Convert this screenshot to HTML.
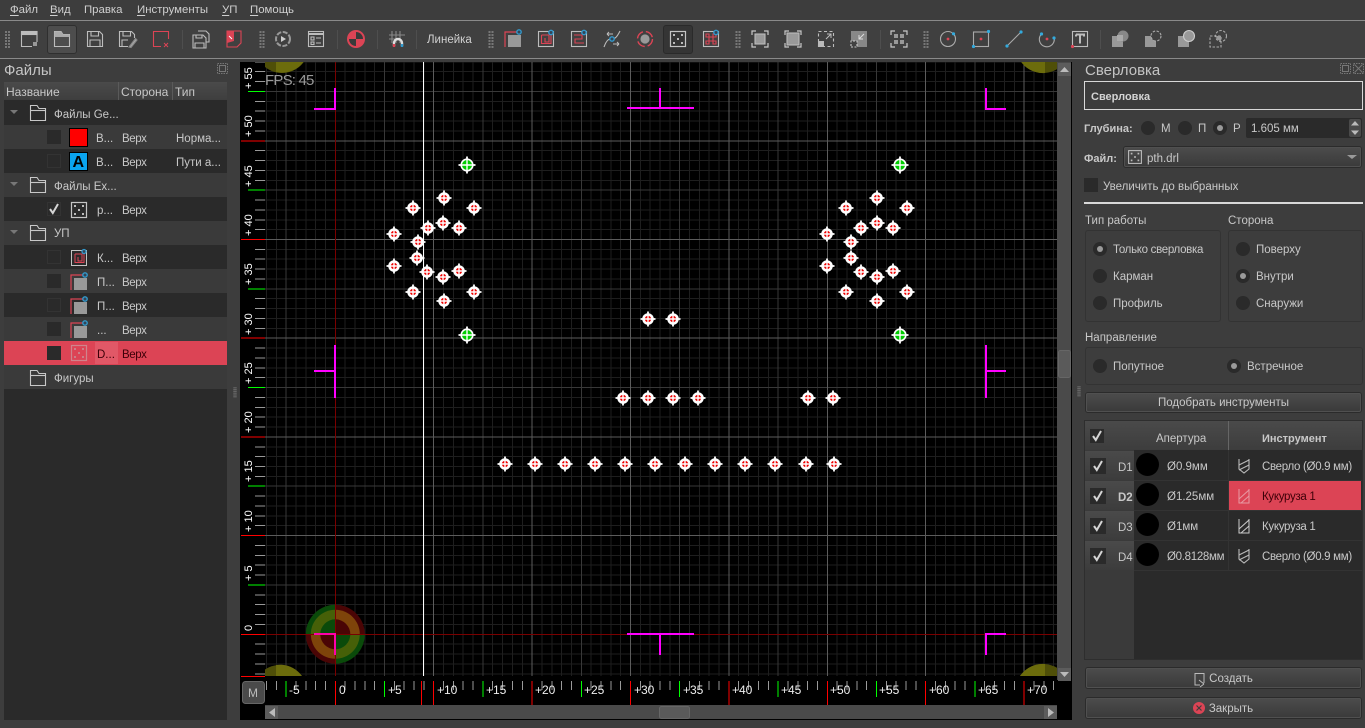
<!DOCTYPE html>
<html><head><meta charset="utf-8"><title>FlatCAM</title>
<style>
html,body{margin:0;padding:0;width:1365px;height:728px;overflow:hidden;background:#3d3d3d}
body{position:relative;font-family:"Liberation Sans","DejaVu Sans",sans-serif;font-size:11.5px;color:#c8c8c8}
.b{position:absolute;box-sizing:border-box}
.t{position:absolute;white-space:nowrap;line-height:16px;height:16px;margin-top:1px}
.m{font-size:11.4px;color:#cfcfcf;top:1px}
.m u{text-underline-offset:2px}
.h{font-size:12px;top:83px;color:#c8c8c8}
.hd{font-size:15px;color:#c4c4c4}
.v{left:122px;letter-spacing:-.4px}
.ts{letter-spacing:-.3px}
.btn{position:absolute;box-sizing:border-box;background:linear-gradient(#4c4c4c,#3a3a3a);border:1px solid #2b2b2b;outline:1px solid #505050;outline-offset:-2px;border-radius:3px;text-align:center;color:#c8c8c8;font-size:11.5px}
.r{position:absolute;width:14px;height:14px;border-radius:50%;background:#2a2a2a}
.r.on::after{content:"";position:absolute;left:4px;top:4px;width:6px;height:6px;border-radius:50%;background:#9a9a9a}
.g{position:absolute;box-sizing:border-box;border:1px solid #333;border-radius:3px}
.bold{font-weight:bold}
svg{position:absolute;left:0;top:0}
</style></head><body>
<!-- toolbar -->
<div class="b" style="left:0;top:20px;width:1365px;height:1px;background:#8a8a8a"></div>
<div class="b" style="left:0;top:21px;width:1365px;height:37px;background:#404040"></div>
<div class="b" style="left:0;top:58px;width:1365px;height:1px;background:#8a8a8a"></div>
<div class="b" style="left:47px;top:25px;width:30px;height:29px;background:#4d4d4d;border:1px solid #2f2f2f;border-radius:3px"></div>
<div class="b" style="left:663px;top:25px;width:30px;height:29px;background:#353535;border:1px solid #2a2a2a;border-radius:3px"></div>
<span class="t m" style="left:10px"><u>Ф</u>айл</span>
<span class="t m" style="left:50px"><u>В</u>ид</span>
<span class="t m" style="left:84px">Правка</span>
<span class="t m" style="left:137px"><u>И</u>нструменты</span>
<span class="t m" style="left:222px"><u>У</u>П</span>
<span class="t m" style="left:250px"><u>П</u>омощь</span>
<span class="t" style="left:427px;top:31px;font-size:11.5px;color:#d0d0d0">Линейка</span>

<!-- left panel -->
<span class="t hd" style="left:4px;top:62px">Файлы</span>
<div class="b" style="left:4px;top:82px;width:223px;height:638px;background:#2a2a2a"></div>
<div class="b" style="left:4px;top:82px;width:223px;height:18px;background:linear-gradient(#4a4a4a,#3e3e3e)"></div>
<div class="b" style="left:118px;top:82px;width:1px;height:18px;background:#5a5a5a"></div>
<div class="b" style="left:172px;top:82px;width:1px;height:18px;background:#5a5a5a"></div>
<span class="t h" style="left:6px">Название</span>
<span class="t h" style="left:121px">Сторона</span>
<span class="t h" style="left:175px">Тип</span>
<div class="b" style="left:4px;top:125px;width:223px;height:24px;background:#3a3a3a"></div>
<div class="b" style="left:4px;top:173px;width:223px;height:24px;background:#3a3a3a"></div>
<div class="b" style="left:4px;top:221px;width:223px;height:24px;background:#3a3a3a"></div>
<div class="b" style="left:4px;top:269px;width:223px;height:24px;background:#3a3a3a"></div>
<div class="b" style="left:4px;top:317px;width:223px;height:24px;background:#3a3a3a"></div>
<div class="b" style="left:4px;top:341px;width:223px;height:24px;background:#dc4455"></div>
<div class="b" style="left:95px;top:342px;width:23px;height:22px;background:#e15867"></div>
<div class="b" style="left:4px;top:365px;width:223px;height:24px;background:#3a3a3a"></div>
<span class="t" style="left:54px;top:106px">Файлы Ge...</span>
<span class="t" style="left:96px;top:130px">В...</span><span class="t v" style="top:130px">Верх</span><span class="t" style="left:176px;top:130px">Норма...</span>
<span class="t" style="left:96px;top:154px">В...</span><span class="t v" style="top:154px">Верх</span><span class="t" style="left:176px;top:154px">Пути а...</span>
<span class="t" style="left:54px;top:178px">Файлы Ex...</span>
<span class="t" style="left:97px;top:202px">p...</span><span class="t v" style="top:202px">Верх</span>
<span class="t" style="left:54px;top:225px">УП</span>
<span class="t" style="left:97px;top:250px">К...</span><span class="t v" style="top:250px">Верх</span>
<span class="t" style="left:97px;top:274px">П...</span><span class="t v" style="top:274px">Верх</span>
<span class="t" style="left:97px;top:298px">П...</span><span class="t v" style="top:298px">Верх</span>
<span class="t" style="left:97px;top:322px">...</span><span class="t v" style="top:322px">Верх</span>
<span class="t" style="left:97px;top:346px;color:#3d0008">D...</span><span class="t v" style="top:346px;color:#3d0008">Верх</span>
<span class="t" style="left:54px;top:370px">Фигуры</span>

<!-- right panel -->
<span class="t hd" style="left:1085px;top:62px">Сверловка</span>
<div class="b" style="left:1084px;top:81px;width:279px;height:29px;border:1px solid #d8d8d8;background:#3c3c3c"></div>
<span class="t bold" style="left:1091px;top:88px;font-size:11px;color:#d4d4d4">Сверловка</span>
<span class="t bold" style="left:1084px;top:120px;font-size:11px">Глубина:</span>
<div class="r" style="left:1141px;top:121px"></div><span class="t" style="left:1161px;top:120px">М</span>
<div class="r" style="left:1178px;top:121px"></div><span class="t" style="left:1198px;top:120px">П</span>
<div class="r on" style="left:1213px;top:121px"></div><span class="t" style="left:1233px;top:120px">Р</span>
<div class="b" style="left:1246px;top:118px;width:116px;height:20px;background:#2a2a2a;border-radius:2px"></div>
<span class="t" style="left:1251px;top:120px">1.605 мм</span>
<div class="b" style="left:1349px;top:119px;width:12px;height:18px;background:#4a4a4a;border-radius:2px"></div>
<span class="t bold" style="left:1084px;top:150px;font-size:11px">Файл:</span>
<div class="btn" style="left:1123px;top:146px;width:239px;height:22px"></div>
<span class="t" style="left:1147px;top:150px">pth.drl</span>
<div class="b" style="left:1084px;top:178px;width:14px;height:14px;background:#2a2a2a"></div>
<span class="t" style="left:1103px;top:178px">Увеличить до выбранных</span>
<div class="b" style="left:1084px;top:202px;width:279px;height:2px;background:#d8d8d8"></div>
<span class="t" style="left:1085px;top:212px">Тип работы</span>
<span class="t" style="left:1228px;top:212px">Сторона</span>
<div class="g" style="left:1085px;top:230px;width:136px;height:92px"></div>
<div class="g" style="left:1228px;top:230px;width:135px;height:92px"></div>
<div class="r on" style="left:1093px;top:242px"></div><span class="t ts" style="left:1113px;top:241px">Только сверловка</span>
<div class="r" style="left:1093px;top:269px"></div><span class="t" style="left:1113px;top:268px">Карман</span>
<div class="r" style="left:1093px;top:296px"></div><span class="t" style="left:1113px;top:295px">Профиль</span>
<div class="r" style="left:1236px;top:242px"></div><span class="t" style="left:1256px;top:241px">Поверху</span>
<div class="r on" style="left:1236px;top:269px"></div><span class="t" style="left:1256px;top:268px">Внутри</span>
<div class="r" style="left:1236px;top:296px"></div><span class="t" style="left:1256px;top:295px">Снаружи</span>
<span class="t" style="left:1085px;top:329px">Направление</span>
<div class="g" style="left:1085px;top:347px;width:278px;height:38px"></div>
<div class="r" style="left:1093px;top:359px"></div><span class="t" style="left:1113px;top:358px">Попутное</span>
<div class="r on" style="left:1227px;top:359px"></div><span class="t" style="left:1247px;top:358px">Встречное</span>
<div class="btn" style="left:1085px;top:392px;width:277px;height:21px;line-height:20px">Подобрать инструменты</div>

<!-- table -->
<div class="b" style="left:1084px;top:420px;width:279px;height:240px;background:#2a2a2a;border:1px solid #2e2e2e"></div>
<div class="b" style="left:1085px;top:421px;width:277px;height:29px;background:linear-gradient(#4a4a4a,#3d3d3d)"></div>
<div class="b" style="left:1228px;top:421px;width:1px;height:29px;background:#666"></div>
<div class="b" style="left:1085px;top:450px;width:49px;height:209px;background:#3a3a3a"></div>
<div class="b" style="left:1085px;top:451px;width:49px;height:29px;background:linear-gradient(#4a4a4a,#3c3c3c)"></div>
<div class="b" style="left:1085px;top:481px;width:49px;height:29px;background:linear-gradient(#4a4a4a,#3c3c3c)"></div>
<div class="b" style="left:1085px;top:511px;width:49px;height:29px;background:linear-gradient(#4a4a4a,#3c3c3c)"></div>
<div class="b" style="left:1085px;top:541px;width:49px;height:29px;background:linear-gradient(#4a4a4a,#3c3c3c)"></div>
<div class="b" style="left:1134px;top:480px;width:228px;height:1px;background:#333"></div>
<div class="b" style="left:1134px;top:510px;width:228px;height:1px;background:#333"></div>
<div class="b" style="left:1134px;top:540px;width:228px;height:1px;background:#333"></div>
<div class="b" style="left:1134px;top:570px;width:228px;height:1px;background:#333"></div>
<div class="b" style="left:1228px;top:450px;width:1px;height:120px;background:#333"></div>
<div class="b" style="left:1229px;top:481px;width:132px;height:29px;background:#dc4455"></div>
<div class="b" style="left:1090px;top:429px;width:14px;height:14px;background:#2a2a2a"></div>
<div class="b" style="left:1090px;top:458px;width:16px;height:16px;background:#2a2a2a"></div>
<div class="b" style="left:1090px;top:488px;width:16px;height:16px;background:#2a2a2a"></div>
<div class="b" style="left:1090px;top:518px;width:16px;height:16px;background:#2a2a2a"></div>
<div class="b" style="left:1090px;top:548px;width:16px;height:16px;background:#2a2a2a"></div>
<div class="b" style="left:1136px;top:453px;width:23px;height:23px;border-radius:50%;background:#000"></div>
<div class="b" style="left:1136px;top:483px;width:23px;height:23px;border-radius:50%;background:#000"></div>
<div class="b" style="left:1136px;top:513px;width:23px;height:23px;border-radius:50%;background:#000"></div>
<div class="b" style="left:1136px;top:543px;width:23px;height:23px;border-radius:50%;background:#000"></div>
<span class="t" style="left:1156px;top:430px">Апертура</span>
<span class="t bold" style="left:1262px;top:430px;font-size:11px">Инструмент</span>
<span class="t" style="left:1118px;top:459px">D1</span><span class="t" style="left:1167px;top:458px">Ø0.9мм</span><span class="t ts" style="left:1262px;top:458px">Сверло (Ø0.9 мм)</span>
<span class="t bold" style="left:1118px;top:489px">D2</span><span class="t" style="left:1167px;top:488px">Ø1.25мм</span><span class="t ts" style="left:1262px;top:488px;color:#3d0008">Кукуруза 1</span>
<span class="t" style="left:1118px;top:519px">D3</span><span class="t" style="left:1167px;top:518px">Ø1мм</span><span class="t ts" style="left:1262px;top:518px">Кукуруза 1</span>
<span class="t" style="left:1118px;top:549px">D4</span><span class="t ts" style="left:1167px;top:548px">Ø0.8128мм</span><span class="t ts" style="left:1262px;top:548px">Сверло (Ø0.9 мм)</span>
<div class="btn" style="left:1085px;top:667px;width:277px;height:22px;line-height:22px;padding-left:15px">Создать</div>
<div class="btn" style="left:1085px;top:697px;width:277px;height:22px;line-height:22px;padding-left:15px">Закрыть</div>

<!-- drawing layer -->
<svg width="1365" height="728" viewBox="0 0 1365 728" font-family="Liberation Sans, sans-serif">
<defs>
<clipPath id="cv"><rect x="265" y="62" width="793" height="614"/></clipPath>
<clipPath id="vr"><rect x="240" y="62" width="25" height="618"/></clipPath>
<clipPath id="hr"><rect x="265" y="677" width="792" height="28"/></clipPath>
<path id="gv" d="M9.84 62V676M19.68 62V676M29.52 62V676M39.36 62V676M59.04 62V676M68.88 62V676M78.72 62V676M88.56 62V676" stroke="#1e1e1e" fill="none"/>
<path id="gv5" d="M49.2 62V676" stroke="#383838" fill="none"/>
<path id="gv0" d="M0 62V676" stroke="#5c5c5c" fill="none"/>
<path id="gh" d="M265-9.87H1058M265-19.74H1058M265-29.61H1058M265-39.48H1058M265-59.22H1058M265-69.09H1058M265-78.96H1058M265-88.83H1058" stroke="#1e1e1e" fill="none"/>
<path id="gh5" d="M265-49.35H1058" stroke="#383838" fill="none"/>
<path id="gh0" d="M265 0H1058" stroke="#5c5c5c" fill="none"/>
<g id="vt"><path d="M255-9.87H265M255-19.74H265M255-29.61H265M255-39.48H265M255-59.22H265M255-69.09H265M255-78.96H265M255-88.83H265" stroke="#999" fill="none"/><path d="M248-49.35H265" stroke="#0f0" fill="none"/><path d="M241 0H265" stroke="#f00" fill="none"/></g>
<g id="ht"><path d="M9.84 681V690M19.68 681V690M29.52 681V690M39.36 681V690M59.04 681V690M68.88 681V690M78.72 681V690M88.56 681V690" stroke="#999" fill="none"/><path d="M49.2 681V697" stroke="#0f0" fill="none"/><path d="M0 681V705" stroke="#f00" fill="none"/></g>
<g id="d"><circle r="5.8" fill="#fff"/><path d="M-7.5 0H7.5M0-7.5V7.5" stroke="#fff" stroke-width="1.8"/><circle r="3.2" fill="#e00"/><path d="M-4 0H4M0-4V4" stroke="#fff" stroke-width="1.4"/></g>
<g id="e"><circle r="6.6" fill="#fff"/><path d="M-8.5 0H8.5M0-8.5V8.5" stroke="#fff" stroke-width="1.8"/><circle r="5" fill="#0c0"/><path d="M-5 0H5M0-5V5" stroke="#fff" stroke-width="1.4"/></g>
<g id="dice" fill="none"><rect x="-7.5" y="-7.5" width="15" height="15" stroke="#c4c4c4" stroke-width="1.2"/><g fill="#bbb" stroke="none"><rect x="-5" y="-5" width="2" height="2"/><rect x="3" y="-5" width="2" height="2"/><rect x="-1" y="-1" width="2" height="2"/><rect x="-5" y="3" width="2" height="2"/><rect x="3" y="3" width="2" height="2"/></g></g>
<g id="fold" fill="none" stroke="#c8c8c8" stroke-width="1.1"><path d="M-7.5 7.5V-7.5H-1L1-4.5H7.5V7.5Z"/><path d="M-7.5-2.5H7.5"/></g>
<g id="prof" fill="none"><path d="M-8 8V-7H6" stroke="#dc4455" stroke-width="1.2"/><rect x="-5" y="-4" width="13" height="12" fill="#999" stroke="none"/><circle cx="6" cy="-7" r="2.2" stroke="#39c" stroke-width="1.4" fill="#345"/></g>
<g id="chk"><path d="M-4 0L-1.2 4L4-5" fill="none" stroke="#d4d4d4" stroke-width="2"/></g>
<g id="drill" fill="none" stroke-width="1.1"><path d="M-5-7V3L0 7L5 3V-7M-5-1L5-6M-5 4L5-1"/></g>
<g id="corn" fill="none" stroke="#c8c8c8" stroke-width="1.2"><path d="M-8-4V-8H-4M4-8H8V-4M8 4V8H4M-4 8H-8V4"/></g>
<g id="grip" fill="#777" stroke="none"><rect x="-2.5" y="-8" width="2" height="2"/><rect x=".5" y="-8" width="2" height="2"/><rect x="-2.5" y="-5" width="2" height="2"/><rect x=".5" y="-5" width="2" height="2"/><rect x="-2.5" y="-2" width="2" height="2"/><rect x=".5" y="-2" width="2" height="2"/><rect x="-2.5" y="1" width="2" height="2"/><rect x=".5" y="1" width="2" height="2"/><rect x="-2.5" y="4" width="2" height="2"/><rect x=".5" y="4" width="2" height="2"/><rect x="-2.5" y="7" width="2" height="2"/><rect x=".5" y="7" width="2" height="2"/></g>
</defs>

<!-- canvas -->
<rect x="240" y="62" width="832" height="658" fill="#000"/>
<g shape-rendering="crispEdges">
<g clip-path="url(#cv)">
<use href="#gv" x="236.9"/><use href="#gv" x="335.3"/><use href="#gv" x="433.7"/><use href="#gv" x="532.1"/><use href="#gv" x="630.5"/><use href="#gv" x="728.9"/><use href="#gv" x="827.3"/><use href="#gv" x="925.7"/><use href="#gv" x="1024.1"/>
<use href="#gh" y="733"/><use href="#gh" y="634.3"/><use href="#gh" y="535.6"/><use href="#gh" y="436.9"/><use href="#gh" y="338.2"/><use href="#gh" y="239.5"/><use href="#gh" y="140.8"/>
<use href="#gv5" x="236.9"/><use href="#gv5" x="335.3"/><use href="#gv5" x="433.7"/><use href="#gv5" x="532.1"/><use href="#gv5" x="630.5"/><use href="#gv5" x="728.9"/><use href="#gv5" x="827.3"/><use href="#gv5" x="925.7"/><use href="#gv5" x="1024.1"/>
<use href="#gh5" y="634.3"/><use href="#gh5" y="535.6"/><use href="#gh5" y="436.9"/><use href="#gh5" y="338.2"/><use href="#gh5" y="239.5"/><use href="#gh5" y="140.8"/>
<use href="#gv0" x="433.7"/><use href="#gv0" x="532.1"/><use href="#gv0" x="630.5"/><use href="#gv0" x="728.9"/><use href="#gv0" x="827.3"/><use href="#gv0" x="925.7"/><use href="#gv0" x="1024.1"/>
<use href="#gh0" y="535.6"/><use href="#gh0" y="436.9"/><use href="#gh0" y="338.2"/><use href="#gh0" y="239.5"/><use href="#gh0" y="140.8"/>
</g>
</g>
<g clip-path="url(#cv)">
<!-- corner blobs -->
<circle cx="282" cy="46" r="27" fill="#4f4f08"/><path d="M276 46H309A27 27 0 0 1 276 72Z" fill="#6c6c0c"/>
<circle cx="280" cy="692" r="27" fill="#4f4f08"/><path d="M276 692H307A27 27 0 0 0 276 665Z" fill="#6c6c0c"/>
<circle cx="1043" cy="46" r="27" fill="#4f4f08"/><path d="M1045 46H1016A27 27 0 0 0 1045 73Z" fill="#6c6c0c"/>
<circle cx="1043" cy="692" r="28" fill="#4f4f08"/><path d="M1045 692H1015A28 28 0 0 1 1045 664Z" fill="#6c6c0c"/>
<!-- origin -->
<g transform="translate(335.3 634.3)">
<path d="M0 0V-29.5A29.5 29.5 0 0 0-29.5 0Z" fill="#0a4a0a"/><path d="M0 0V-29.5A29.5 29.5 0 0 1 29.5 0Z" fill="#4a0505"/><path d="M0 0H29.5A29.5 29.5 0 0 1 0 29.5Z" fill="#0a4a0a"/><path d="M0 0H-29.5A29.5 29.5 0 0 0 0 29.5Z" fill="#4a0505"/>
<path d="M0 0V-24.5A24.5 24.5 0 0 0-24.5 0Z" fill="#466008"/><path d="M0 0V-24.5A24.5 24.5 0 0 1 24.5 0Z" fill="#7e440a"/><path d="M0 0H24.5A24.5 24.5 0 0 1 0 24.5Z" fill="#466008"/><path d="M0 0H-24.5A24.5 24.5 0 0 0 0 24.5Z" fill="#7e440a"/>
<path d="M0 0V-15A15 15 0 0 0-15 0Z" fill="#0a4a0a"/><path d="M0 0V-15A15 15 0 0 1 15 0Z" fill="#4a0505"/><path d="M0 0H15A15 15 0 0 1 0 15Z" fill="#0a4a0a"/><path d="M0 0H-15A15 15 0 0 0 0 15Z" fill="#4a0505"/>
</g>
<g shape-rendering="crispEdges">
<path d="M265 634.5H1058M335.5 62V676" stroke="#7a0000" fill="none"/>
<path d="M265 676.5H1058" stroke="#fff" fill="none"/>
<path d="M423.5 62V676" stroke="#fff" fill="none" stroke-width="1.4"/>
<!-- magenta marks -->
<path d="M335 88V109.5M314 109H336M660 88V108M627 108H694M986 88V109.5M985 109H1006M335 345V398M314 371H335M986 345V398M986 371H1006M627 634H694M660 634V655M985 634H1006M986 634V655" stroke="#f0f" stroke-width="2" fill="none"/>
<path d="M314 634H336M335 634V655" stroke="#f0a" stroke-width="2" fill="none"/>
</g>
<!-- holes -->
<use href="#e" x="467" y="165"/><use href="#e" x="900" y="165"/><use href="#e" x="467" y="335"/><use href="#e" x="900" y="335"/>
<use href="#d" x="413" y="208"/><use href="#d" x="444" y="198"/><use href="#d" x="474" y="208"/><use href="#d" x="394" y="234"/><use href="#d" x="428" y="228"/><use href="#d" x="443" y="223"/><use href="#d" x="459" y="228"/><use href="#d" x="418" y="242"/><use href="#d" x="417" y="258"/><use href="#d" x="394" y="266"/><use href="#d" x="427" y="272"/><use href="#d" x="443" y="277"/><use href="#d" x="459" y="271"/><use href="#d" x="413" y="292"/><use href="#d" x="444" y="301"/><use href="#d" x="474" y="292"/>
<use href="#d" x="846" y="208"/><use href="#d" x="877" y="198"/><use href="#d" x="907" y="208"/><use href="#d" x="827" y="234"/><use href="#d" x="861" y="228"/><use href="#d" x="877" y="223"/><use href="#d" x="893" y="228"/><use href="#d" x="851" y="242"/><use href="#d" x="851" y="258"/><use href="#d" x="827" y="266"/><use href="#d" x="861" y="272"/><use href="#d" x="877" y="277"/><use href="#d" x="893" y="271"/><use href="#d" x="846" y="292"/><use href="#d" x="877" y="301"/><use href="#d" x="907" y="292"/>
<use href="#d" x="648" y="319"/><use href="#d" x="673" y="319"/><use href="#d" x="623" y="398"/><use href="#d" x="648" y="398"/><use href="#d" x="673" y="398"/><use href="#d" x="698" y="398"/><use href="#d" x="808" y="398"/><use href="#d" x="833" y="398"/>
<use href="#d" x="505" y="464"/><use href="#d" x="535" y="464"/><use href="#d" x="565" y="464"/><use href="#d" x="595" y="464"/><use href="#d" x="625" y="464"/><use href="#d" x="655" y="464"/><use href="#d" x="685" y="464"/><use href="#d" x="715" y="464"/><use href="#d" x="745" y="464"/><use href="#d" x="775" y="464"/><use href="#d" x="806" y="464"/><use href="#d" x="834" y="464"/>
<text x="265" y="85" font-size="15" fill="#999" letter-spacing="-.8">FPS: 45</text>
</g>
<!-- rulers -->
<g shape-rendering="crispEdges"><g clip-path="url(#vr)">
<use href="#vt" y="733"/><use href="#vt" y="634.3"/><use href="#vt" y="535.6"/><use href="#vt" y="436.9"/><use href="#vt" y="338.2"/><use href="#vt" y="239.5"/><use href="#vt" y="140.8"/>
<path d="M241 676.5H265" stroke="#f00"/>
</g>
<g clip-path="url(#hr)">
<use href="#ht" x="236.9"/><use href="#ht" x="335.3"/><use href="#ht" x="433.7"/><use href="#ht" x="532.1"/><use href="#ht" x="630.5"/><use href="#ht" x="728.9"/><use href="#ht" x="827.3"/><use href="#ht" x="925.7"/><use href="#ht" x="1024.1"/>
<path d="M421.5 681V705" stroke="#f00"/>
</g></g>
<g fill="#fff" font-size="11">
<text transform="translate(252 89) rotate(-90)">+ 55</text>
<text transform="translate(252 137) rotate(-90)">+ 50</text>
<text transform="translate(252 187) rotate(-90)">+ 45</text>
<text transform="translate(252 236) rotate(-90)">+ 40</text>
<text transform="translate(252 285) rotate(-90)">+ 35</text>
<text transform="translate(252 335) rotate(-90)">+ 30</text>
<text transform="translate(252 384) rotate(-90)">+ 25</text>
<text transform="translate(252 433) rotate(-90)">+ 20</text>
<text transform="translate(252 482) rotate(-90)">+ 15</text>
<text transform="translate(252 532) rotate(-90)">+ 10</text>
<text transform="translate(252 581) rotate(-90)">+ 5</text>
<text transform="translate(252 631) rotate(-90)">0</text>
</g>
<g fill="#eee" font-size="12">
<text x="289" y="694">-5</text><text x="339" y="694">0</text><text x="388" y="694">+5</text><text x="437" y="694">+10</text><text x="486" y="694">+15</text><text x="535" y="694">+20</text><text x="584" y="694">+25</text><text x="634" y="694">+30</text><text x="683" y="694">+35</text><text x="732" y="694">+40</text><text x="781" y="694">+45</text><text x="830" y="694">+50</text><text x="879" y="694">+55</text><text x="929" y="694">+60</text><text x="978" y="694">+65</text><text x="1027" y="694">+70</text>
</g>
<!-- M button -->
<rect x="242.5" y="681.5" width="22" height="22" rx="3" fill="#4a4a4a" stroke="#666"/>
<text x="248" y="697" font-size="12" fill="#bbb">M</text>
<!-- scrollbars -->
<rect x="1057" y="62" width="14" height="618" fill="#4a4a4a"/>
<rect x="1058" y="63" width="13" height="13" fill="#5c5c5c"/><path d="M1060 72L1064.5 67L1069 72Z" fill="#bbb"/>
<rect x="1058" y="668" width="13" height="13" fill="#5c5c5c"/><path d="M1060 672L1064.5 677L1069 672Z" fill="#bbb"/>
<rect x="1058.5" y="350.5" width="12" height="27" rx="2" fill="#5a5a5a" stroke="#666"/>
<rect x="265" y="705" width="792" height="14" fill="#4a4a4a"/>
<rect x="265" y="706" width="13" height="13" fill="#5c5c5c"/><path d="M275 708L269 712.5L275 717Z" fill="#bbb"/>
<rect x="1044" y="706" width="13" height="13" fill="#5c5c5c"/><path d="M1048 708L1054 712.5L1048 717Z" fill="#bbb"/>
<rect x="659.5" y="706.5" width="30" height="12" rx="2" fill="#5a5a5a" stroke="#666"/>

<!-- toolbar icons -->
<g fill="none" stroke="#bdbdbd" stroke-width="1.1">
<use href="#grip" x="7.5" y="39"/><use href="#grip" x="262" y="39"/><use href="#grip" x="491" y="39"/><use href="#grip" x="738" y="39"/><use href="#grip" x="926" y="39"/>
<path d="M182.5 30V49M337.5 30V49M377.5 30V49M416.5 30V49M880.5 30V49M1100.5 30V49" stroke="#4e4e4e" stroke-width="1"/>
<g transform="translate(29 39)"><path d="M8 3V-7.5H-7.5V7.5H3"/><rect x="-7.5" y="-7.5" width="15.5" height="3" fill="#bdbdbd"/><rect x="4" y="3" width="4" height="4" fill="#999" stroke="none"/></g>
<g transform="translate(62 39)"><path d="M-7.5 7.5V-7.5H-1L1-4.5H7.5V7.5Z"/><path d="M-7.5-7.5H-1L1-4.5H7.5V-2H-7.5Z" fill="#aaa" stroke="none"/></g>
<g transform="translate(95 39)"><path d="M-7.5-7.5H4.5L7.5-4.5V7.5H-7.5Z"/><path d="M-4-7.5V-3H3.5V-7.5M-5 7.5V1H5V7.5"/></g>
<g transform="translate(127 39)"><path d="M1 7.5H-7.5V-7.5H4.5L7.5-4.5V-1"/><path d="M-4-7.5V-3H3.5V-7.5M-5 7.5V1H1"/><path d="M2 8L8.5-.5L10 1L4 8.5Z" fill="#aaa" stroke="#888"/></g>
<g transform="translate(161 39)" stroke="#dc4455"><path d="M0 7.5H-7.5V-7.5H7.5V0"/><path d="M3 4L7 8M7 4L3 8" stroke-width="1"/></g>
<g transform="translate(201 39)"><path d="M-3-8H5L8-5V3H5"/><path d="M-8-4H2L5-1V9H-8Z" fill="#404040"/><path d="M-5-4V-1H1V-4M-6 9V4H3V9"/></g>
<g transform="translate(234 39)" stroke="#dc4455"><path d="M-7-8H7V4L3 8H-7Z"/><path d="M-7-8H0V2L-7 4Z" fill="#dc4455" stroke="none"/><path d="M-5-3L-2 0" stroke="#fff" stroke-width="1"/></g>
<g transform="translate(283 39)"><circle r="7" stroke-dasharray="5 1.5" stroke-width="2" stroke="#999"/><path d="M-2-3L3 0L-2 3Z" fill="#ccc" stroke="none"/></g>
<g transform="translate(316 39)"><rect x="-7.5" y="-7.5" width="15" height="15"/><path d="M-7.5-5H7.5" stroke-width="2"/><rect x="-5" y="-2" width="3" height="3"/><rect x="-5" y="3" width="3" height="2.5"/><path d="M0-1H5M0 4H5"/></g>
<g transform="translate(356 39)" stroke="none"><circle r="9" fill="#dc4455"/><path d="M0 0V-7A7 7 0 0 1 7 0Z" fill="#3a3a3a"/><path d="M0 0V7A7 7 0 0 1-7 0Z" fill="#3a3a3a"/></g>
<g transform="translate(397 39)"><path d="M-8-4H8M-8 0H4M-5-8V4M-1-8V4M3-8V4" stroke="#888"/><path d="M-3 7V4A4 4 0 0 1 5 4V7" stroke="#ddd" stroke-width="2.4"/><path d="M-3 5V8" stroke="#dc4455" stroke-width="2.4"/><path d="M5 5V8" stroke="#39c" stroke-width="2.4"/></g>
<use href="#prof" x="513" y="39"/>
<g transform="translate(546 39)"><rect x="-7.5" y="-7.5" width="15" height="15"/><path d="M-4.5-4H3V3H-1V-1" stroke="#dc4455"/><path d="M-4.5-4V4.5H5V-4" stroke="#dc4455"/><circle cx="5" cy="-6.5" r="2.2" stroke="#39c" stroke-width="1.4" fill="#345"/></g>
<g transform="translate(579 39)"><rect x="-7.5" y="-7.5" width="15" height="15"/><path d="M-5-4H3V0H-4V4H5" stroke="#dc4455"/><circle cx="5" cy="-6.5" r="2.2" stroke="#39c" stroke-width="1.4" fill="#345"/></g>
<g transform="translate(612 39)"><path d="M-8 8C-5 0-3 0 0 0S5-2 8-8" stroke="#bbb"/><path d="M-5-5H1M1 5H7M-5-5L-3-7M-5-5L-3-3M7 5L5 3M7 5L5 7" stroke-width="1"/><circle cy="0" r="2.2" stroke="#39c" stroke-width="1.4" fill="#345"/></g>
<g transform="translate(645 39)"><circle r="7.5" stroke="#dc4455" stroke-width="1.4" stroke-dasharray="9 3"/><circle r="4.6" fill="#999" stroke="none"/></g>
<use href="#dice" x="678" y="39"/>
<g transform="translate(711 39)"><rect x="-7.5" y="-7.5" width="15" height="15"/><path d="M-4-2H3M-4 2H3M-2-5V5M2-5V5M-5-5H-2V-2H-5ZM2-5H5V-2H2ZM-5 2H-2V5H-5ZM2 2H5V5H2Z" stroke="#dc4455"/><circle cx="5" cy="-6.5" r="2.2" stroke="#39c" stroke-width="1.4" fill="#345"/></g>
<g transform="translate(760 39)"><use href="#corn"/><rect x="-5" y="-5" width="10" height="10" fill="#999" stroke="#bbb"/></g>
<g transform="translate(793 39)"><use href="#corn"/><rect x="-6" y="-6" width="12" height="12" fill="#999" stroke="#bbb"/></g>
<g transform="translate(826 39)"><rect x="-7.5" y="-7.5" width="15" height="15" stroke-dasharray="3 2.5"/><rect x="-8" y="2" width="6" height="6" fill="#bbb" stroke="none"/><path d="M0 0L5-5M1-5H5V-1" stroke-width="1"/></g>
<g transform="translate(859 39)"><rect x="-8" y="-8" width="16" height="16" fill="#888" stroke="none"/><path d="M-8 8H-2V2H-8Z" fill="#404040" stroke="#ccc" stroke-dasharray="2 1.5"/><path d="M5-5L0 0M0-4V0H4" stroke="#ddd" stroke-width="1"/></g>
<g transform="translate(899 39)"><use href="#corn"/><g fill="#999" stroke="none"><rect x="-5" y="-5" width="4" height="4"/><rect x="1" y="-5" width="4" height="4"/><rect x="-5" y="1" width="4" height="4"/><rect x="1" y="1" width="4" height="4"/></g></g>
<g transform="translate(948 39)" stroke="#aaa"><circle r="7.5"/><circle r="1.4" fill="#dc4455" stroke="none"/><circle cx="5.5" cy="-5.2" r="1.6" fill="#3ad" stroke="none"/></g>
<g transform="translate(981 39)" stroke="#aaa"><rect x="-7.5" y="-7" width="15" height="14.5"/><circle r="1.4" fill="#dc4455" stroke="none"/><circle cx="7.5" cy="-7.5" r="1.6" fill="#3ad" stroke="none"/><circle cx="-7.5" cy="7.5" r="1.6" fill="#3ad" stroke="none"/></g>
<g transform="translate(1014 39)" stroke="#aaa"><path d="M-7 7L7-7"/><circle cx="7" cy="-7" r="1.6" fill="#3ad" stroke="none"/><circle cx="-7" cy="7" r="1.6" fill="#3ad" stroke="none"/></g>
<g transform="translate(1047 39)" stroke="#aaa"><path d="M-5.5-5A7.5 7.5 0 1 0 7-2"/><circle r="1.4" fill="#dc4455" stroke="none"/><circle cx="-5.5" cy="-5" r="1.6" fill="#3ad" stroke="none"/><circle cx="7" cy="-1" r="1.6" fill="#3ad" stroke="none"/></g>
<g transform="translate(1080 39)"><rect x="-7.5" y="-7.5" width="15" height="15"/><path d="M-4-4.5H4V-2.5M-4-4.5V-2.5M0-4.5V4.5" stroke-width="2"/><circle cx="-7.5" cy="7.5" r="1.6" fill="#dc4455" stroke="none"/></g>
<g transform="translate(1120 39)" stroke="none"><rect x="-8" y="-3" width="11" height="11" fill="#999"/><circle cx="3" cy="-3" r="5.5" fill="#888"/><rect x="-3" y="-4" width="6" height="6" fill="#aaa"/></g>
<g transform="translate(1153 39)"><path d="M-8-3H-2A5 5 0 0 0 3 2V8H-8Z" fill="#999" stroke="none"/><circle cx="3" cy="-3" r="5" stroke="#aaa" stroke-dasharray="2.5 1.5"/></g>
<g transform="translate(1186 39)"><rect x="-8" y="-3" width="11" height="11" fill="#999" stroke="none"/><circle cx="3" cy="-3" r="5.5" fill="#999" stroke="#ccc"/></g>
<g transform="translate(1218 39)"><rect x="-8" y="-3" width="11" height="11" stroke="#aaa" stroke-dasharray="2.5 1.5"/><circle cx="3" cy="-3" r="5.5" stroke="#aaa" stroke-dasharray="2.5 1.5"/><path d="M-2-3H3V2A5 5 0 0 1-2-3Z" fill="#999" stroke="none"/></g>
</g>

<!-- tree icons -->
<g fill="none">
<path d="M10 110H18L14 114Z" fill="#777"/><path d="M10 182H18L14 186Z" fill="#777"/><path d="M10 230H18L14 234Z" fill="#777"/>
<use href="#fold" x="38" y="113"/><use href="#fold" x="38" y="185"/><use href="#fold" x="38" y="233"/><use href="#fold" x="38" y="378"/>
<g fill="#2a2a2a"><rect x="47" y="130" width="14" height="14"/><rect x="47" y="274" width="14" height="14"/><rect x="47" y="322" width="14" height="14"/><rect x="47" y="346" width="14" height="14"/></g>
<g stroke="#333"><rect x="47.5" y="154.5" width="13" height="13"/><rect x="47.5" y="202.5" width="13" height="13"/><rect x="47.5" y="250.5" width="13" height="13"/><rect x="47.5" y="298.5" width="13" height="13"/></g>
<use href="#chk" x="54" y="209"/>
<rect x="69.5" y="128.5" width="18" height="18" fill="#f00" stroke="#000"/>
<rect x="69.5" y="152.5" width="18" height="18" fill="#0aa4ef" stroke="#000"/>
<text x="72.5" y="167" font-size="16" font-weight="bold" fill="#000">A</text>
<use href="#dice" x="79" y="210"/>
<g transform="translate(79 258)"><rect x="-7.5" y="-7.5" width="15" height="15" stroke="#c4c4c4"/><path d="M-4-4H3V3H-1V-1M-4-4V4.5H5V-4" stroke="#dc4455"/><circle cx="5" cy="-6.5" r="2" stroke="#39c" stroke-width="1.3" fill="#345"/></g>
<use href="#prof" x="79" y="282"/><use href="#prof" x="79" y="306"/><use href="#prof" x="79" y="330"/>
<use href="#dice" x="79" y="353" opacity=".5"/>
</g>
<!-- dock float icons -->
<g fill="none" stroke="#777">
<g transform="translate(217.5 63.5)"><rect width="10" height="10" stroke-dasharray="1.5 1"/><rect x="2" y="2" width="6" height="6"/></g>
<g transform="translate(1340.5 63.5)"><rect width="10" height="10" stroke-dasharray="1.5 1"/><rect x="2" y="2" width="6" height="6"/></g>
<g transform="translate(1353.5 63.5)"><rect width="10" height="10" stroke-dasharray="1.5 1"/><path d="M1 1L9 9M9 1L1 9"/></g>
</g>
<!-- splitter grips -->
<g><use href="#grip" transform="translate(235 392) scale(.6)"/><use href="#grip" transform="translate(1079 391) scale(.6)"/></g>
<!-- right panel icons -->
<g fill="none">
<path d="M1351 125.5L1355 121L1359 125.5ZM1351 130.5L1355 135L1359 130.5Z" fill="#bbb"/>
<use href="#dice" transform="translate(1135 157) scale(.85)"/>
<path d="M1347 155H1357L1352 159Z" fill="#999"/>
<use href="#chk" x="1097" y="436"/><use href="#chk" x="1098" y="466"/><use href="#chk" x="1098" y="496"/><use href="#chk" x="1098" y="526"/><use href="#chk" x="1098" y="556"/>
<use href="#drill" x="1244" y="466" stroke="#bbb"/>
<g transform="translate(1244 496)" stroke="#e79aa3" fill="none"><path d="M-5-7V7H5V-7M-5 3L5-6M-3 7L5 0"/></g>
<g transform="translate(1244 526)" stroke="#ccc" fill="none"><path d="M-5-7V7H5V-7M-5 3L5-6M-3 7L5 0"/></g>
<use href="#drill" x="1244" y="556" stroke="#bbb"/>
<g stroke="#bbb"><path d="M1204 683V673.5H1195V685H1200M1199 680L1204 684M1204 684L1200 687" stroke-width="1"/></g>
<circle cx="1199" cy="708" r="6" fill="#dc4455"/><path d="M1196.5 705.5L1201.5 710.5M1201.5 705.5L1196.5 710.5" stroke="#3c3c3c" stroke-width="1.2"/>
</g>
</svg>
</body></html>
